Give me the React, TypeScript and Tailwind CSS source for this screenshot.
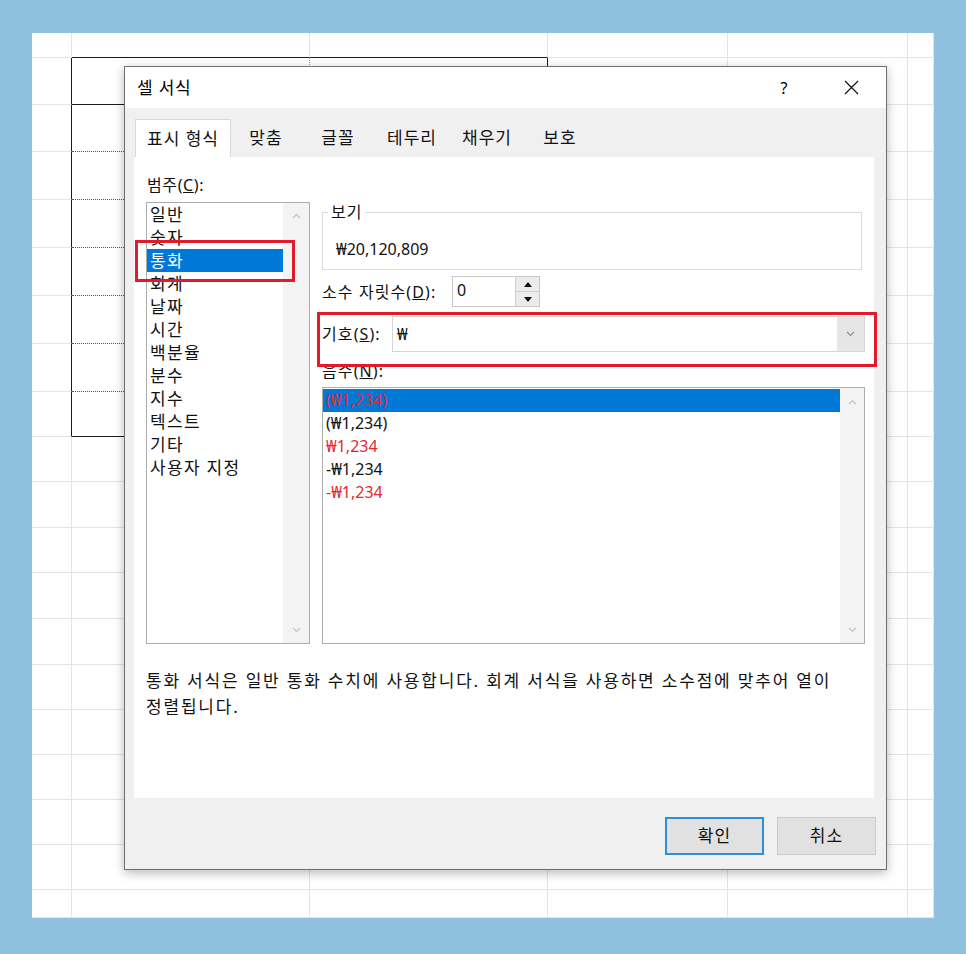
import React from "react";

const rowH = [
  "h-[25px]", "h-[47px]", "h-[47px]", "h-[48px]", "h-[48px]", "h-[48px]", "h-[48px]", "h-[48px]",
  "h-[45px]", "h-[45px]", "h-[46px]", "h-[45px]", "h-[46px]", "h-[46px]", "h-[45px]", "h-[45px]",
  "h-[45px]", "h-[45px]", "h-[45px]", "h-[28px]",
];
const colW = ["w-[40px]", "w-[238px]", "w-[238px]", "w-[180px]", "w-[180px]", "w-[26px]"];

function cellClass(r: number, c: number) {
  const inTableCol = c === 1 || c === 2;
  let b = "border-b border-b-[#e4e4e4]";
  if (inTableCol && (r === 0 || r === 1 || r === 8)) b = "border-b border-b-[#1a1a1a]";
  else if (inTableCol && r >= 2 && r <= 7) b = "border-b border-b-[#555555] [border-bottom-style:dotted]";
  let rr = "border-r border-r-[#e4e4e4]";
  if (r >= 1 && r <= 8 && (c === 0 || c === 2)) rr = "border-r border-r-[#1a1a1a]";
  else if (r >= 1 && r <= 8 && c === 1) rr = "border-r border-r-[#9a9a9a] [border-right-style:dotted]";
  return `${b} ${rr}`;
}

function Grid() {
  return (
    <div className="flex flex-col">
      {rowH.map((h, r) => (
        <div key={r} className={`flex ${h}`}>
          {colW.map((w, c) => (
            <div key={c} className={`${w} h-full shrink-0 ${cellClass(r, c)}`} />
          ))}
        </div>
      ))}
    </div>
  );
}

function ChevUp({ className = "" }: { className?: string }) {
  return (
    <svg width="9" height="6" viewBox="0 0 9 6" className={className}>
      <path d="M1 5 L4.5 1.5 L8 5" fill="none" stroke="#c2c2c2" strokeWidth="1.1" />
    </svg>
  );
}
function ChevDown({ className = "", color = "#c2c2c2" }: { className?: string; color?: string }) {
  return (
    <svg width="9" height="6" viewBox="0 0 9 6" className={className}>
      <path d="M1 1 L4.5 4.5 L8 1" fill="none" stroke={color} strokeWidth="1.1" />
    </svg>
  );
}

const categories = ["일반", "숫자", "통화", "회계", "날짜", "시간", "백분율", "분수", "지수", "텍스트", "기타", "사용자 지정"];

const negatives: { t: string; red: boolean }[] = [
  { t: "(₩1,234)", red: true },
  { t: "(₩1,234)", red: false },
  { t: "₩1,234", red: true },
  { t: "-₩1,234", red: false },
  { t: "-₩1,234", red: true },
];

function Dialog() {
  return (
    <div className="absolute left-[92px] top-[33px] w-[763px] h-[804px] border border-[#6f6f6f] bg-[#f0f0f0] shadow-[0_3px_10px_rgba(0,0,0,0.28)] flex flex-col">
      {/* Title bar */}
      <div className="h-[41px] bg-white flex items-center pl-[12px] text-[17px] text-black">
        <span className="tracking-[0.8px]">셀 서식</span>
        <span className="ml-auto w-[30px] text-center text-[16px]">?</span>
        <span className="ml-[37px] mr-[20px] w-[30px] flex items-center justify-center">
          <svg width="15" height="15" viewBox="0 0 15 15">
            <path d="M1 1 L14 14 M14 1 L1 14" stroke="#111" strokeWidth="1.2" fill="none" />
          </svg>
        </span>
      </div>

      {/* Tabs */}
      <div className="h-[49px] pt-[11px] pl-[10px] flex items-end text-[17px] tracking-[1px] text-[#111]">
        <div className="w-[96px] h-[38px] bg-white border-l border-t border-r border-[#d9d9d9] flex items-center justify-center">
          표시 형식
        </div>
        <div className="w-[70px] h-[38px] flex items-center justify-center">맞춤</div>
        <div className="w-[74px] h-[38px] flex items-center justify-center">글꼴</div>
        <div className="w-[74px] h-[38px] flex items-center justify-center">테두리</div>
        <div className="w-[76px] h-[38px] flex items-center justify-center">채우기</div>
        <div className="w-[70px] h-[38px] flex items-center justify-center">보호</div>
      </div>

      {/* Panel */}
      <div className="relative ml-[9px] w-[740px] h-[641px] bg-white text-[#111]">
        <div className="flex pl-[12px] pt-[17px]">
          {/* Left column */}
          <div className="w-[164px]">
            <div className="h-[22px] leading-[22px] pl-[1px] text-[16px] tracking-[0.6px]">
              범주(<span className="underline">C</span>):
            </div>
            <div className="mt-[6px] h-[442px] border border-[#acacac] flex">
              <div className="w-[136px] pt-0 text-[17px] tracking-[1.3px]">
                {categories.map((c, i) => (
                  <div
                    key={c}
                    className={
                      i === 2
                        ? "h-[23px] leading-[23px] pl-[3px] bg-[#0078d7] text-white"
                        : "h-[23px] leading-[23px] pl-[3px]"
                    }
                  >
                    {c}
                  </div>
                ))}
              </div>
              <div className="flex-1 bg-[#f3f3f3] flex flex-col items-center justify-between pt-[10px] pb-[10px]">
                <ChevUp />
                <ChevDown />
              </div>
            </div>
          </div>

          {/* Right column */}
          <div className="ml-[12px] w-[543px]">
            <fieldset className="mt-[27px] w-[540px] border border-[#dcdcdc] px-[13px] pt-[16px] pb-[10px]">
              <legend className="ml-[-8px] px-[3px] text-[16px] leading-[22px] tracking-[1px]">보기</legend>
              <div className="h-[20px] leading-[20px] text-[16px]">₩20,120,809</div>
            </fieldset>

            <div className="mt-[6px] h-[31px] flex items-center text-[16px]">
              <div className="w-[130px] tracking-[1.1px]">
                소수 자릿수(<span className="underline">D</span>):
              </div>
              <div className="w-[88px] h-[31px] border border-[#c8c8c8] flex">
                <div className="flex-1 pl-[4px] leading-[26px]">0</div>
                <div className="w-[24px] flex flex-col border-l border-[#d0d0d0]">
                  <div className="flex-1 bg-[#ececec] border-b border-[#cfcfcf] flex items-center justify-center">
                    <svg width="8" height="5" viewBox="0 0 8 5"><path d="M0 5 L4 0 L8 5 Z" fill="#111" /></svg>
                  </div>
                  <div className="flex-1 bg-[#ececec] flex items-center justify-center">
                    <svg width="8" height="5" viewBox="0 0 8 5"><path d="M0 0 L4 5 L8 0 Z" fill="#111" /></svg>
                  </div>
                </div>
              </div>
            </div>

            <div className="mt-[9px] h-[36px] flex items-center text-[16px]">
              <div className="w-[70px] tracking-[1.1px]">
                기호(<span className="underline">S</span>):
              </div>
              <div className="w-[473px] h-[36px] border border-[#d6d6d6] flex bg-white">
                <div className="flex-1 pl-[4px] leading-[34px]">₩</div>
                <div className="w-[27px] bg-[#e6e6e6] flex items-center justify-center">
                  <ChevDown color="#8a8a8a" />
                </div>
              </div>
            </div>

            <div className="mt-[8px] h-[22px] leading-[22px] text-[16px] tracking-[1.1px]">
              음수(<span className="underline">N</span>):
            </div>

            <div className="mt-[5px] h-[257px] w-[543px] border border-[#acacac] flex text-[16px]">
              <div className="w-[517px] pt-[1px]">
                {negatives.map((n, i) => (
                  <div
                    key={i}
                    className={
                      i === 0
                        ? "h-[23px] leading-[23px] pl-[3px] bg-[#0078d7] text-[#e8262e]"
                        : n.red
                        ? "h-[23px] leading-[23px] pl-[3px] text-[#e8262e]"
                        : "h-[23px] leading-[23px] pl-[3px] text-[#111]"
                    }
                  >
                    {n.t}
                  </div>
                ))}
              </div>
              <div className="flex-1 bg-[#f3f3f3] flex flex-col items-center justify-between pt-[11px] pb-[10px]">
                <ChevUp />
                <ChevDown />
              </div>
            </div>
          </div>
        </div>

        {/* Description */}
        <div className="pl-[12px] mt-[24px] text-[17px] leading-[26px] tracking-[1.8px] text-[#111]">
          통화 서식은 일반 통화 수치에 사용합니다. 회계 서식을 사용하면 소수점에 맞추어 열이
          <br />
          정렬됩니다.
        </div>

        {/* Red annotation boxes */}
        <div className="absolute left-[1px] top-[83px] w-[160px] h-[42px] border-[3px] border-[#e3192c]" />
        <div className="absolute left-[183px] top-[155px] w-[560px] h-[55px] border-[3px] border-[#e3192c]" />
      </div>

      {/* Buttons */}
      <div className="mt-[19px] flex justify-end pr-[10px] gap-[13px] text-[17px] tracking-[1px] text-[#111]">
        <div className="w-[99px] h-[38px] bg-[#e1e1e1] border-2 border-[#2d8fd9] flex items-center justify-center">확인</div>
        <div className="w-[99px] h-[38px] bg-[#e1e1e1] border border-[#c9c9c9] flex items-center justify-center">취소</div>
      </div>
    </div>
  );
}

export default function App() {
  return (
    <div className="w-[966px] h-[954px] bg-[#8fc1de] pt-[33px] pl-[32px] [font-family:'Noto_Sans','Noto_Sans_CJK_KR',sans-serif]">
      <div className="relative w-[902px] h-[885px] bg-white overflow-hidden">
        <Grid />
        <Dialog />
      </div>
    </div>
  );
}
